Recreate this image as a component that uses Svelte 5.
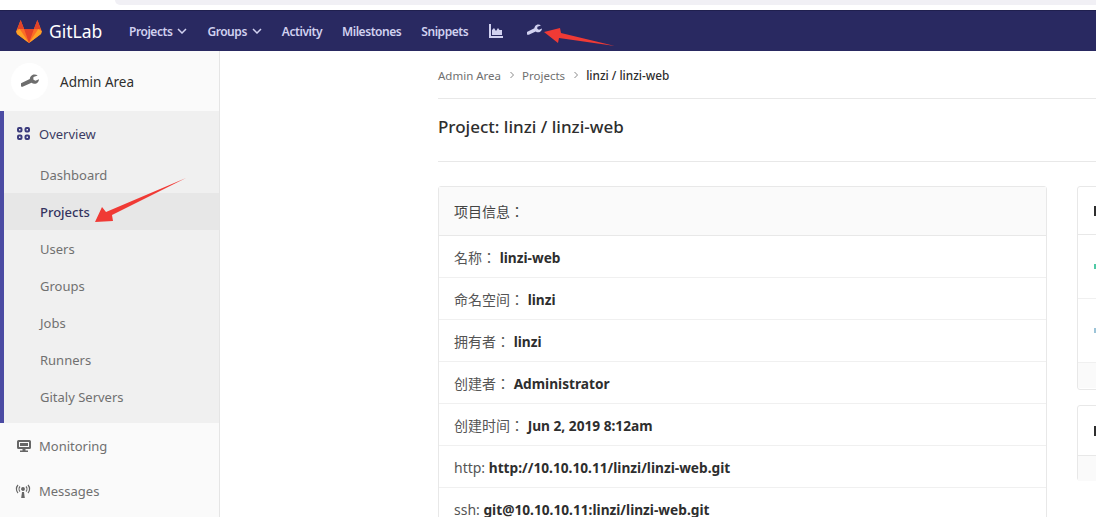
<script>
  const subItems = ['Dashboard', 'Projects', 'Users', 'Groups', 'Jobs', 'Runners', 'Gitaly Servers'];
  const rows = [
    ['名称：', 'linzi-web'],
    ['命名空间：', 'linzi'],
    ['拥有者：', 'linzi'],
    ['创建者：', 'Administrator'],
    ['创建时间：', 'Jun 2, 2019 8:12am'],
    ['http:', 'http://10.10.10.11/linzi/linzi-web.git'],
    ['ssh:', 'git@10.10.10.11:linzi/linzi-web.git']
  ];
  const wrench = 'M13.6 1.2c-1.7-.6-3.7-.2-4.9 1.1-1.2 1.2-1.5 3-1 4.5L1.6 13c-.8.8-.8 2 0 2.7.8.7 1.9.7 2.6 0l6.2-6.1c1.5.5 3.3.2 4.5-1 1.2-1.2 1.6-3 1-4.6l-2.7 2.6-2.3-.6-.6-2.2z';
</script>

<div class="page">
  <div class="browser-strip"><div class="tab-line"></div></div>

  <header class="navbar">
    <div class="brand">
      <svg class="logo" width="26" height="24" viewBox="0 0 26 24">
        <path fill="#fc6d26" d="M13 24 1 15 .2 12.2 4.6 1l3.5 9h9.8l3.5-9 4.4 11.2L25 15z"/>
        <path fill="#e24329" d="M13 24 8.100 10h9.800z"/>
        <path fill="#fca326" d="M.2 12.200 1 15l12 9L3.700 10z"/>
        <path fill="#fca326" d="M25.800 12.200 25 15l-12 9 9.300-14z"/>
        <path fill="#e24329" d="M4.600 1 1.500 10H8.100zM21.400 1l3.100 9h-6.600z"/>
      </svg>
      <span class="brand-name">GitLab</span>
    </div>
    <nav class="nav-links">
      <span class="nav-link">Projects
        <svg width="10" height="6" viewBox="0 0 10 6"><path d="M1 1l4 4 4-4" fill="none" stroke="currentColor" stroke-width="1.500"/></svg>
      </span>
      <span class="nav-link">Groups
        <svg width="10" height="6" viewBox="0 0 10 6"><path d="M1 1l4 4 4-4" fill="none" stroke="currentColor" stroke-width="1.500"/></svg>
      </span>
      <span class="nav-link">Activity</span>
      <span class="nav-link">Milestones</span>
      <span class="nav-link">Snippets</span>
      <svg class="nav-chart" width="14" height="14" viewBox="0 0 14 14" fill="currentColor"><path d="M0 0h2v12h12v2H0z"/><path d="M3 11V6l2-2 2 3 2-3 1.500 2L13 6v5z"/></svg>
      <svg class="nav-wrench" width="15" height="18" viewBox="0 0 17 17" fill="currentColor"><path transform="rotate(20 8.500 8.500)" d={wrench}/></svg>
    </nav>
    <svg class="annot nav-arrow" width="76" height="28" viewBox="0 0 76 28"><path fill="#f03a35" d="M4 12 20 8l1 5 54 13-56-8-1 5z"/></svg>
  </header>

  <div class="body">
    <aside class="sidebar">
      <div class="context">
        <span class="avatar">
          <svg width="18" height="22" viewBox="0 0 17 17" fill="#6d6d6d"><path transform="rotate(20 8.500 8.500)" d={wrench}/></svg>
        </span>
        <span class="context-name">Admin Area</span>
      </div>
      <div class="active-group">
        <div class="group-head">
          <svg width="13" height="13" viewBox="0 0 13 13" fill="none" stroke="#3b3b7d" stroke-width="2"><rect x="1" y="1" width="3.500" height="3.500" rx="1"/><rect x="8.500" y="1" width="3.500" height="3.500" rx="1"/><rect x="1" y="8.500" width="3.500" height="3.500" rx="1"/><rect x="8.500" y="8.500" width="3.500" height="3.500" rx="1"/></svg>
          <span>Overview</span>
        </div>
        <ul class="sub-list">
          {#each subItems as item}
            <li class:current={item === 'Projects'}>{item}</li>
          {/each}
        </ul>
      </div>
      <div class="side-item monitoring">
        <svg width="14" height="14" viewBox="0 0 14 14" fill="#666"><path fill-rule="evenodd" d="M1.500 1h11A1.500 1.500 0 0 1 14 2.500v6A1.500 1.500 0 0 1 12.500 10H8.500v1.500H11V13H3v-1.500h2.500V10H1.500A1.500 1.500 0 0 1 0 8.500v-6A1.500 1.500 0 0 1 1.500 1zM2 3v5h10V3z"/><path d="M3 4h8v3H3z"/></svg>
        <span>Monitoring</span>
      </div>
      <div class="side-item messages">
        <svg width="16" height="15" viewBox="0 0 16 15" fill="none" stroke="#666" stroke-width="1.200"><path d="M3 1C.9 3.200.9 6.800 3 9M13 1c2.100 2.200 2.100 5.800 0 8M5 2.500C3.800 3.800 3.800 6.200 5 7.500M11 2.500c1.200 1.300 1.200 3.700 0 5"/><circle cx="8" cy="5" r="1.300" fill="#666"/><path d="M7 8h2l.8 6H6.200z" fill="#666" stroke="none"/></svg>
        <span>Messages</span>
      </div>
    </aside>

    <main class="content">
      <div class="breadcrumb">
        <span>Admin Area</span>
        <svg width="6" height="8" viewBox="0 0 6 8"><path d="M1.500 1l3 3-3 3" fill="none" stroke="#8a8a8a"/></svg>
        <span>Projects</span>
        <svg width="6" height="8" viewBox="0 0 6 8"><path d="M1.500 1l3 3-3 3" fill="none" stroke="#8a8a8a"/></svg>
        <strong>linzi / linzi-web</strong>
      </div>
      <h1 class="title">Project: linzi / linzi-web</h1>

      <div class="columns">
        <section class="card info">
          <div class="card-head">项目信息：</div>
          {#each rows as [label, value]}
            <div class="row">{label} <strong>{value}</strong></div>
          {/each}
        </section>

        <div class="side-cards">
          <section class="card side-one">
            <div class="stub-head"><i></i></div>
            <div class="stub-row"><b class="dot green"></b></div>
            <div class="stub-row"><b class="dot blue"></b></div>
            <div class="stub-foot"></div>
          </section>
          <section class="card side-two">
            <div class="stub-head short"><i></i></div>
            <div class="stub-foot"></div>
          </section>
        </div>
      </div>
    </main>
  </div>

  <svg class="annot side-arrow" width="96" height="48" viewBox="0 0 96 48"><path fill="#f03a35" d="M1 45 8 30l4 5L92 1 18 38l1 6z"/></svg>
</div>

<style>
  :global(body) {
    margin: 0;
    background: #fff;
  }

  .page {
    position: relative;
    width: 1096px;
    height: 517px;
    overflow: hidden;
    font-family: "Noto Sans", "Noto Sans CJK TC", sans-serif;
    font-size: 13px;
    color: #2e2e2e;
  }

  .browser-strip {
    height: 10px;
    padding-left: 115px;
    background: #fff;
  }

  .tab-line {
    height: 5px;
    background: #f1f0f5;
    border-radius: 0 0 0 6px;
  }

  .navbar {
    position: relative;
    display: flex;
    align-items: center;
    height: 41px;
    padding-left: 16px;
    background: #292961;
    box-sizing: border-box;
    border-top: 1px solid #20204f;
  }

  .brand {
    display: flex;
    align-items: center;
    gap: 7px;
    width: 113px;
  }

  .brand-name {
    color: #fff;
    font-size: 17.500px;
    line-height: 20px;
  }

  .nav-links {
    display: flex;
    align-items: center;
    color: #d1d1f0;
    font-size: 12px;
    font-weight: 600;
    letter-spacing: -0.45px;
  }

  .nav-link {
    display: inline-flex;
    align-items: center;
    gap: 5px;
    margin-right: 20px;
  }

  .nav-chart {
    margin-left: 1px;
  }

  .nav-wrench {
    margin-left: 24px;
    margin-top: -2px;
    color: #d1d1f0;
  }

  .annot {
    position: absolute;
  }

  .nav-arrow {
    left: 540px;
    top: 9px;
  }

  .side-arrow {
    left: 94px;
    top: 177px;
  }

  .body {
    display: flex;
    height: 466px;
  }

  .sidebar {
    width: 220px;
    flex: none;
    box-sizing: border-box;
    background: #fafafa;
    border-right: 1px solid #e5e5e5;
  }

  .context {
    display: flex;
    align-items: center;
    gap: 12px;
    height: 60px;
    padding-left: 11px;
    box-sizing: border-box;
    font-size: 13.500px;
    color: #2e2e2e;
  }

  .context-name {
    padding-top: 2px;
  }

  .avatar {
    display: flex;
    align-items: center;
    justify-content: center;
    width: 37px;
    height: 37px;
    border-radius: 50%;
    background: #fff;
  }

  .active-group {
    height: 312px;
    box-sizing: border-box;
    background: #f0f0f0;
    border-left: 4px solid #4b4ba3;
  }

  .group-head {
    display: flex;
    align-items: center;
    gap: 9px;
    height: 45px;
    padding-left: 13px;
    color: #3b3b63;
    font-size: 13px;
  }

  .sub-list {
    list-style: none;
    margin: 0;
    padding: 0;
  }

  .sub-list li {
    height: 37px;
    line-height: 39px;
    padding-left: 36px;
    color: #707070;
    font-size: 13px;
  }

  .sub-list li.current {
    background: #e7e7e7;
    color: #34345f;
    font-weight: 500;
  }

  .side-item {
    display: flex;
    align-items: center;
    gap: 8px;
    padding-left: 17px;
    color: #707070;
    font-size: 13px;
  }

  .monitoring {
    height: 46px;
  }

  .messages {
    height: 44px;
    padding-left: 15px;
  }

  .content {
    flex: 1;
    min-width: 0;
    padding-left: 218px;
    overflow: hidden;
  }

  .breadcrumb {
    display: flex;
    align-items: center;
    gap: 7.500px;
    height: 48px;
    box-sizing: border-box;
    padding-top: 1px;
    border-bottom: 1px solid #e8e8e8;
    font-size: 11.500px;
    color: #707070;
  }

  .breadcrumb strong {
    font-weight: 500;
    font-size: 11.800px;
    color: #2e2e2e;
  }

  .title {
    margin: 0;
    height: 63px;
    line-height: 56px;
    box-sizing: border-box;
    border-bottom: 1px solid #e8e8e8;
    font-size: 17px;
    font-weight: 500;
    color: #2e2e2e;
  }

  .columns {
    display: flex;
    gap: 30px;
    margin-top: 24px;
  }

  .card {
    border: 1px solid #e8e8e8;
    border-radius: 3px;
    box-sizing: border-box;
    background: #fff;
  }

  .info {
    flex: none;
    width: 609px;
  }

  .card-head {
    height: 49px;
    line-height: 49px;
    padding-left: 15px;
    box-sizing: border-box;
    background: #fafafa;
    border-bottom: 1px solid #e8e8e8;
    font-size: 14px;
    color: #444;
  }

  .row {
    height: 42px;
    line-height: 43px;
    padding-left: 15px;
    box-sizing: border-box;
    border-bottom: 1px solid #f0f0f0;
    font-size: 14px;
    color: #555;
  }

  .row strong {
    color: #2e2e2e;
    font-weight: 700;
    font-size: 13.700px;
  }

  .side-cards {
    display: flex;
    flex-direction: column;
    gap: 15px;
    width: 300px;
    flex: none;
  }

  .side-one {
    height: 204px;
  }

  .side-two {
    height: 76px;
  }

  .stub-head {
    height: 48px;
    padding-left: 16px;
    display: flex;
    align-items: center;
    box-sizing: border-box;
    border-bottom: 1px solid #e8e8e8;
  }

  .stub-head.short {
    height: 50px;
  }

  .stub-head i {
    width: 3px;
    height: 10px;
    background: #2e2e2e;
  }

  .stub-row {
    height: 64px;
    box-sizing: border-box;
    padding-left: 16px;
    display: flex;
    align-items: center;
    border-bottom: 1px solid #f0f0f0;
  }

  .dot {
    width: 3px;
    height: 5px;
  }

  .green {
    background: #4fc9a5;
  }

  .blue {
    background: #9cc4d8;
  }

  .stub-foot {
    height: 25px;
    background: #fafafa;
  }
</style>
